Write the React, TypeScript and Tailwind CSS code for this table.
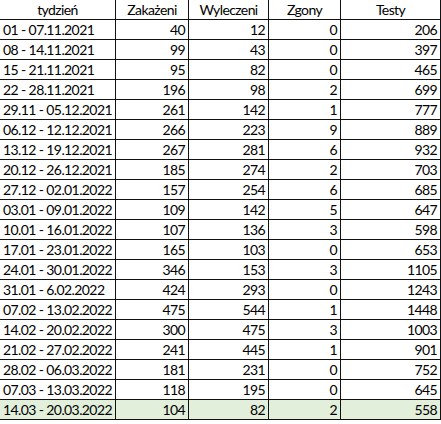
import React from "react";

const rows: [string, number, number, number, number][] = [
  ["01 - 07.11.2021", 40, 12, 0, 206],
  ["08 - 14.11.2021", 99, 43, 0, 397],
  ["15 - 21.11.2021", 95, 82, 0, 465],
  ["22 - 28.11.2021", 196, 98, 2, 699],
  ["29.11 - 05.12.2021", 261, 142, 1, 777],
  ["06.12 - 12.12.2021", 266, 223, 9, 889],
  ["13.12 - 19.12.2021", 267, 281, 6, 932],
  ["20.12 - 26.12.2021", 185, 274, 2, 703],
  ["27.12 - 02.01.2022", 157, 254, 6, 685],
  ["03.01 - 09.01.2022", 109, 142, 5, 647],
  ["10.01 - 16.01.2022", 107, 136, 3, 598],
  ["17.01 - 23.01.2022", 165, 103, 0, 653],
  ["24.01 - 30.01.2022", 346, 153, 3, 1105],
  ["31.01 - 6.02.2022", 424, 293, 0, 1243],
  ["07.02 - 13.02.2022", 475, 544, 1, 1448],
  ["14.02 - 20.02.2022", 300, 475, 3, 1003],
  ["21.02 - 27.02.2022", 241, 445, 1, 901],
  ["28.02 - 06.03.2022", 181, 231, 0, 752],
  ["07.03 - 13.03.2022", 118, 195, 0, 645],
  ["14.03 - 20.03.2022", 104, 82, 2, 558],
];

const headers = ["tydzień", "Zakażeni", "Wyleczeni", "Zgony", "Testy"];

export default function App() {
  return (
    <div
      className="w-[441px] h-[424px] bg-white text-black overflow-hidden"
      style={{ fontFamily: "Lato, 'Liberation Sans', sans-serif" }}
    >
      <div className="grid grid-cols-[116px_73px_80px_72px_100px] text-[14px] tracking-[-0.6px] leading-none whitespace-nowrap">
        {headers.map((h) => (
          <div
            key={h}
            className="h-[20px] border-b border-r border-[#111] flex items-center justify-center pt-[1px]"
          >
            {h}
          </div>
        ))}
        {rows.map((r, i) => {
          const last = i === rows.length - 1;
          const bg = last ? "bg-[#e2efda]" : "bg-white";
          return (
            <React.Fragment key={r[0]}>
              <div
                className={`h-[20px] border-b border-r border-[#111] flex items-center pl-[3px] pt-[1px] ${bg}`}
              >
                {r[0]}
              </div>
              {r.slice(1).map((v, j) => (
                <div
                  key={j}
                  className={`h-[20px] border-b border-r border-[#111] flex items-center justify-end pr-[3px] pt-[1px] ${bg}`}
                >
                  {v}
                </div>
              ))}
            </React.Fragment>
          );
        })}
      </div>
    </div>
  );
}
